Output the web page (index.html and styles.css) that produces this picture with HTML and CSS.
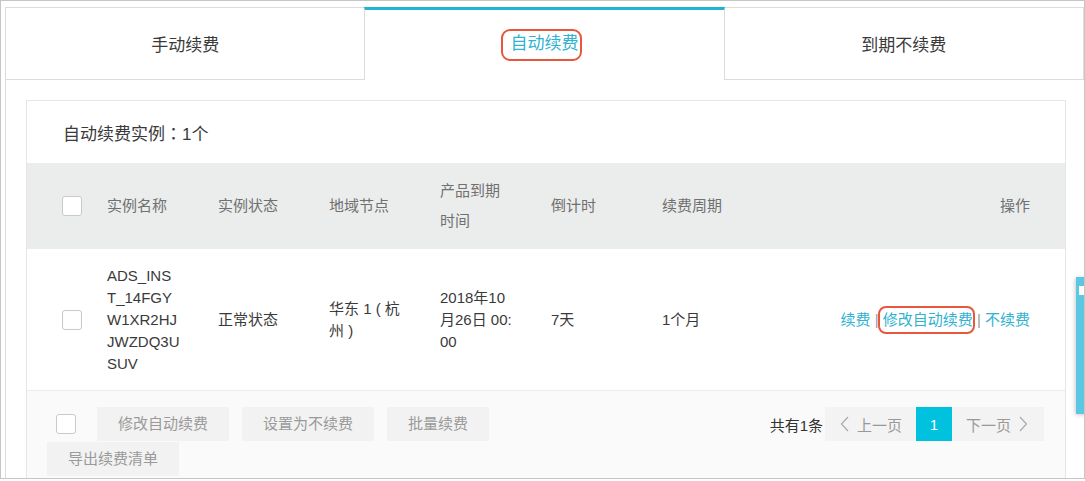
FILE: index.html
```html
<!DOCTYPE html>
<html lang="zh-CN">
<head>
<meta charset="utf-8">
<title>自动续费</title>
<link rel="stylesheet" href="styles.css">
</head>
<body>
<div class="frame">
  <div class="renew">
    <div class="tabs">
      <div class="tab">手动续费</div>
      <div class="tab tab-active"><span class="hl hl-tab">自动续费</span></div>
      <div class="tab">到期不续费</div>
    </div>
    <div class="tab-body">
      <div class="card">
        <div class="card-title">自动续费实例<span class="punct">：</span>1个</div>
        <div class="row row-head">
          <div class="cell cell-check"><span class="checkbox"></span></div>
          <div class="cell">实例名称</div>
          <div class="cell">实例状态</div>
          <div class="cell">地域节点</div>
          <div class="cell">产品到期时间</div>
          <div class="cell">倒计时</div>
          <div class="cell">续费周期</div>
          <div class="cell cell-ops">操作</div>
        </div>
        <div class="row row-data">
          <div class="cell cell-check"><span class="checkbox"></span></div>
          <div class="cell">ADS_INST_14FGYW1XR2HJJWZDQ3USUV</div>
          <div class="cell">正常状态</div>
          <div class="cell">华东 1 ( 杭州 )</div>
          <div class="cell">2018年10月26日 00:00</div>
          <div class="cell">7天</div>
          <div class="cell">1个月</div>
          <div class="cell cell-ops"><a class="link">续费</a> <span class="sep">|</span> <a class="link"><span class="hl hl-op">修改自动续费</span></a> <span class="sep">|</span> <a class="link">不续费</a></div>
        </div>
        <div class="card-foot">
          <div class="foot-actions">
            <span class="checkbox foot-check"></span>
            <button class="btn">修改自动续费</button>
            <button class="btn">设置为不续费</button>
            <button class="btn">批量续费</button>
            <button class="btn">导出续费清单</button>
          </div>
          <div class="pager-wrap">
            <span class="total">共有1条</span>
            <div class="pager">
              <span class="pg pg-prev"><svg class="chev" width="9" height="16" viewBox="0 0 9 16"><polyline points="8,1 1.5,8 8,15" fill="none" stroke="#aaa" stroke-width="1.2"/></svg>上一页</span>
              <span class="pg-num">1</span>
              <span class="pg pg-next">下一页<svg class="chev" width="9" height="16" viewBox="0 0 9 16"><polyline points="1,1 7.5,8 1,15" fill="none" stroke="#aaa" stroke-width="1.2"/></svg></span>
            </div>
          </div>
        </div>
      </div>
    </div>
  </div>
  <div class="side-float"><span class="side-icon"></span></div>
</div>
</body>
</html>
```

FILE: styles.css
```css
* { box-sizing: border-box; }
html, body { margin: 0; padding: 0; background: #fff; }
body {
  font-family: "Liberation Sans", "Noto Sans CJK SC", sans-serif;
  color: #333;
}
.punct { font-family: "Noto Sans CJK TC", sans-serif; }
.frame {
  position: relative;
  width: 1085px;
  height: 479px;
  border: 1px solid #c6c6c6;
  padding: 6px 0 0 4px;
  overflow: hidden;
}
.renew { width: 1079px; }
.tabs { display: flex; height: 73px; }
.tab {
  flex: 1 1 0;
  display: flex;
  align-items: center;
  justify-content: center;
  font-size: 17px;
  color: #3a3a3a;
  border: 1px solid #dcdcdc;
}
.tab:first-child { border-right: none; }
.tab:last-child { border-left: none; }
.tab-active {
  border: none;
  border-top: 3px solid #1eb4d2;
  color: #2fb3d1;
  border-left: 1px solid #dcdcdc;
  border-right: 1px solid #dcdcdc;
  padding-bottom: 2px;
}
.hl { position: relative; display: inline-block; }
.hl::after {
  content: "";
  position: absolute;
  border: 2px solid #e8573b;
  border-radius: 9px;
}
.hl-tab { line-height: 20px; }
.hl-tab::after { top: -5px; bottom: -7px; left: -9px; right: -4px; }
.hl-op { line-height: 22px; }
.hl-op::after { top: -3px; bottom: -3px; left: -5px; right: -2px; border-radius: 8px; }

.tab-body {
  border-left: 1px solid #dcdcdc;
  padding: 20px 0 0 20px;
  height: 400px;
}
.card {
  width: 1040px;
  border: 1px solid #e6e6e6;
}
.card-title {
  height: 62px;
  padding-left: 36px;
  display: flex;
  align-items: center;
  font-size: 17px;
  color: #3a3a3a;
}
.row {
  display: grid;
  grid-template-columns: 80px repeat(6, 111px) 1fr;
  align-items: center;
  font-size: 15px;
}
.row-head {
  background: #ebeded;
  color: #707070;
  line-height: 30px;
  padding: 13px 0;
}
.row-data {
  color: #3a3a3a;
  line-height: 22px;
  padding: 16px 0 15px;
}
.cell {
  padding-right: 38px;
  word-break: break-all;
}
.cell-check { padding-left: 35px; padding-right: 0; display: flex; align-items: center; }
.cell-ops { text-align: right; padding-right: 35px; }
.checkbox {
  display: inline-block;
  width: 20px;
  height: 20px;
  border: 1px solid #c9c9c9;
  border-radius: 3px;
  background: #fff;
}
.link { color: #2fb3d1; text-decoration: none; }
.sep { color: #999; }

.card-foot {
  border-top: 1px solid #ececec;
  background: #fafafa;
  padding: 16px 21px 10px 20px;
  display: flex;
  justify-content: space-between;
  align-items: flex-start;
}
.foot-actions {
  width: 520px;
  display: flex;
  flex-wrap: wrap;
  align-items: center;
  row-gap: 1px;
}
.foot-check { margin: 0 21px 0 9px; }
.btn {
  height: 34px;
  padding: 0 21px;
  margin: 0 13px 0 0;
  border: none;
  background: #f2f2f2;
  color: #9a9a9a;
  font-family: "Liberation Sans", "Noto Sans CJK SC", sans-serif;
  font-size: 15px;
  line-height: 34px;
}
.pager-wrap {
  display: flex;
  align-items: center;
  height: 34px;
  font-size: 15px;
}
.total { color: #333; margin-right: 2px; }
.pager {
  display: flex;
  align-items: center;
  height: 34px;
  background: #f3f3f3;
  padding: 0 16px 0 15px;
  color: #999;
}
.pg { display: flex; align-items: center; }
.pg-prev .chev { margin-right: 8px; }
.pg-next .chev { margin-left: 8px; }
.pg-num {
  width: 36px;
  height: 34px;
  margin: 0 14px;
  background: #00c1de;
  color: #fff;
  display: flex;
  align-items: center;
  justify-content: center;
}
.side-float {
  position: absolute;
  left: 1075px;
  top: 276px;
  width: 14px;
  height: 137px;
  background: #5bc7e2;
  box-shadow: -1px 1px 4px rgba(0, 0, 0, 0.2);
  z-index: 2;
}
.side-icon {
  position: absolute;
  left: 3px;
  top: 9px;
  width: 6px;
  height: 9px;
  background: #fff;
}
```
